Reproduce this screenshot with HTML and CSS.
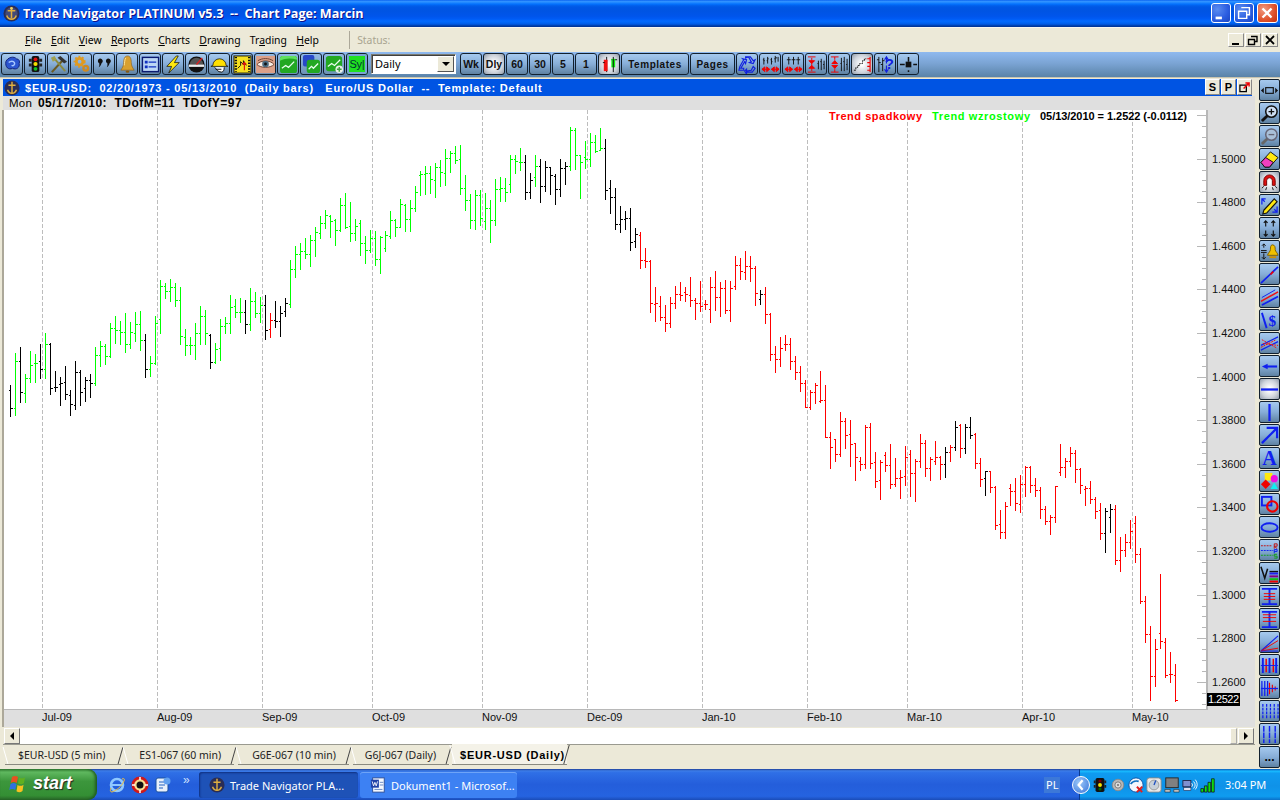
FILE: index.html
```html
<!DOCTYPE html>
<html lang="en">
<head>
<meta charset="utf-8">
<title>Trade Navigator PLATINUM v5.3</title>
<link rel="stylesheet" href="styles.css">
</head>
<body>
<div class="app">
  <header class="titlebar">
    <svg class="logo" viewBox="0 0 18 18"><circle cx="9" cy="9" r="8.5" fill="#2a2d55"/><circle cx="9" cy="9" r="6.5" fill="#444a78"/><path d="M9 2v12M5 6h8M4 11c1 3 3 4 5 4s4-1 5-4" fill="none" stroke="#e0b040" stroke-width="1.6"/><circle cx="9" cy="3.5" r="1.4" fill="#f0d060"/></svg>
    <span class="title-text">Trade Navigator PLATINUM v5.3  --  Chart Page: Marcin</span>
    <div class="winbtns">
      <button class="wb"><svg viewBox="0 0 20 20"><path d="M4 14h7v3H4z" fill="#fff"/></svg></button>
      <button class="wb"><svg viewBox="0 0 20 20"><path d="M7 4h9v8h-3M4 8h9v8H4z" fill="none" stroke="#fff" stroke-width="1.6"/></svg></button>
      <button class="wb wb-close"><svg viewBox="0 0 20 20"><path d="M5 5l10 10M15 5L5 15" stroke="#fff" stroke-width="2.6"/></svg></button>
    </div>
  </header>

  <nav class="menubar">
    <span class="mi"><u>F</u>ile</span>
    <span class="mi"><u>E</u>dit</span>
    <span class="mi"><u>V</u>iew</span>
    <span class="mi"><u>R</u>eports</span>
    <span class="mi"><u>C</u>harts</span>
    <span class="mi"><u>D</u>rawing</span>
    <span class="mi">Tr<u>a</u>ding</span>
    <span class="mi"><u>H</u>elp</span>
    <span class="status">Status:</span>
    <div class="mdibtns">
      <button class="mb"><svg viewBox="0 0 14 12"><path d="M3 9h7v2H3z"/></svg></button>
      <button class="mb"><svg viewBox="0 0 14 12"><path d="M5 2.500h6v5h-2M2.500 5.500h6v5h-6z" fill="none" stroke="#000" stroke-width="1.400"/></svg></button>
      <button class="mb"><svg viewBox="0 0 14 12"><path d="M3 2l8 8M11 2l-8 8" stroke="#000" stroke-width="1.800"/></svg></button>
    </div>
  </nav>

  <div class="toolbar">
    <button class="tb"><svg viewBox="0 0 20 20"><path d="M3 7c2-5 9-6 11-3 3 0 4 3 3 5 1 4-3 7-7 5-4 2-8-1-7-7z" fill="#2b55d0" stroke="#11227a"/><path d="M6 8c2-2 5-2 6 0s-1 4-3 3" fill="none" stroke="#a8c8ff" stroke-width="1.500"/></svg></button>
    <button class="tb"><svg viewBox="0 0 20 20"><path d="M3 4h3v3H3zM14 4h3v3h-3zM3 9h3v3H3zM14 9h3v3h-3z" fill="#222"/><rect x="6" y="1" width="8" height="17" rx="2" fill="#111"/><circle cx="10" cy="4.500" r="2" fill="#e01010"/><circle cx="10" cy="9.500" r="2.200" fill="#f5e000"/><circle cx="10" cy="14.500" r="2" fill="#10c020"/></svg></button>
    <button class="tb"><svg viewBox="0 0 20 20"><path d="M3 18L14 6" stroke="#6b5a20" stroke-width="2.200"/><path d="M9 3l3-2 7 6-3 2z" fill="#333"/><path d="M6 4l11 13" stroke="#8a8a40" stroke-width="2"/><path d="M2 3l4-2 2 4-4 2z" fill="#a0a050"/></svg></button>
    <button class="tb"><svg viewBox="0 0 20 20"><circle cx="8" cy="7" r="3.500" fill="none" stroke="#e09a20" stroke-width="3"/><circle cx="14.500" cy="14" r="2.500" fill="none" stroke="#d08a20" stroke-width="2.400"/><circle cx="8" cy="7" r="5.500" fill="none" stroke="#e09a20" stroke-width="1.600" stroke-dasharray="2 2"/></svg></button>
    <button class="tb"><svg viewBox="0 0 20 20"><path d="M3 6a2.600 2.600 0 1 1 4 2.500c-.5 2-1.500 3.500-3 4.500 .6-1.500 .8-3 .5-4.300A2.500 2.500 0 0 1 3 6zM11.500 6a2.600 2.600 0 1 1 4 2.500c-.5 2-1.500 3.500-3 4.500 .6-1.500 .8-3 .5-4.300A2.500 2.500 0 0 1 11.500 6z" fill="#111"/></svg></button>
    <button class="tb"><svg viewBox="0 0 20 20"><path d="M10 1c3 0 4 3 4 7 0 4 2 6 3 8H3c1-2 3-4 3-8 0-4 1-7 4-7z" fill="#d8a030" stroke="#8a5a10" stroke-width=".6"/><path d="M8 3c-1 2-1 5-1.500 8" stroke="#ffe8a0" fill="none"/><ellipse cx="10" cy="17.500" rx="2" ry="1.200" fill="#8a5a10"/></svg></button>
    <button class="tb"><svg viewBox="0 0 20 20"><rect x="1.500" y="2.500" width="17" height="15" fill="#bcd6f5" stroke="#0a1a70" stroke-width="1.500"/><path d="M4 6h3v3H4zM4 11h3v3H4z" fill="#1030c0"/><path d="M8 7.500h8M8 12.500h8" stroke="#1030c0" stroke-width="1.500"/></svg></button>
    <button class="tb"><svg viewBox="0 0 20 20"><path d="M13 1L3 12h5l-3 7 11-11h-5l4-7z" fill="#ffe810" stroke="#111" stroke-width=".8"/></svg></button>
    <button class="tb"><svg viewBox="0 0 20 20"><circle cx="10" cy="10" r="8.500" fill="#111"/><path d="M3 10a7 7 0 0 1 14 0z" fill="#555"/><rect x="2" y="10" width="16" height="2.500" fill="#eee"/><path d="M10 10l6-7" stroke="#e02020" stroke-width="1.400"/></svg></button>
    <button class="tb"><svg viewBox="0 0 20 20"><path d="M3 11a7 7 0 0 1 14 0l2 1H1z" fill="#ffe000" stroke="#111" stroke-width=".8"/><path d="M5 13c2 2 3 5 7 5 2 0 3-2 3-5" fill="#fff" stroke="#111"/><path d="M6 15h6" stroke="#111"/></svg></button>
    <button class="tb tb-flat"><svg viewBox="0 0 20 20"><rect x="1" y="1" width="18" height="18" fill="#f5e020" stroke="#111"/><path d="M3 2v16M17 2v16" stroke="#111" stroke-width="2.400" stroke-dasharray="1.500 1.500"/><path d="M5 14l3-3v-4l3 3v-4l3 5" stroke="#111" fill="none"/><path d="M12 16V8M10 10l2-2 2 2" stroke="#e01010" fill="none" stroke-width="1.200"/></svg></button>
    <button class="tb tb-flat"><svg viewBox="0 0 20 20"><rect x="0" y="1" width="20" height="18" fill="#dca088"/><path d="M1 10c4-5 14-5 18 0-4 4-14 4-18 0z" fill="#f8ece4" stroke="#6a4030"/><circle cx="10" cy="9.500" r="3.500" fill="#4a6a80"/><circle cx="10" cy="9.500" r="1.500" fill="#111"/><path d="M2 6c5-3 11-3 16 0" stroke="#6a4030" fill="none"/></svg></button>
    <button class="tb tb-flat"><svg viewBox="0 0 20 20"><rect x="1" y="1" width="18" height="18" rx="3" fill="#22a822"/><path d="M1 6c6-3 12-3 18-1v-2l-2-2H3L1 3z" fill="#60e060"/><path d="M3 14l4-3 3 2 6-6" stroke="#eafff0" fill="none" stroke-width="1.400"/></svg></button>
    <button class="tb tb-flat"><svg viewBox="0 0 20 20"><rect x="1" y="0" width="12" height="12" rx="2" fill="#2848c8"/><rect x="5" y="5" width="14" height="14" rx="3" fill="#22a822"/><path d="M7 15l3-3 2 2 5-5" stroke="#eafff0" fill="none" stroke-width="1.300"/></svg></button>
    <button class="tb tb-flat"><svg viewBox="0 0 20 20"><rect x="1" y="1" width="17" height="16" rx="3" fill="#22a822"/><path d="M3 12l4-3 3 2 6-6" stroke="#eafff0" fill="none" stroke-width="1.300"/><circle cx="15" cy="15" r="4" fill="#e8f0e8"/><path d="M15 12.500v5M12.500 15h5" stroke="#40a040" stroke-width="1.500"/></svg></button>
    <button class="tb tb-sym"><span class="sym">Sy|</span></button>

    <div class="combo"><span class="combo-val">Daily</span><span class="combo-btn"><i class="tri-down"></i></span></div>

    <button class="tb txt">Wk</button>
    <button class="tb txt tb-on">Dly</button>
    <button class="tb txt">60</button>
    <button class="tb txt">30</button>
    <button class="tb txt">5</button>
    <button class="tb txt">1</button>
    <button class="tb tb-on"><svg viewBox="0 0 20 20"><path d="M7 2v16" stroke="#111" stroke-width="1"/><rect x="4" y="5" width="4" height="12" fill="#f01010"/><path d="M3 8h2M12 5h6" stroke="#111"/><rect x="12" y="4" width="4" height="9" fill="#10f010"/><path d="M14 2v16" stroke="#111"/></svg></button>
    <button class="tb txt wide-t">Templates</button>
    <button class="tb txt wide-p">Pages</button>

    <button class="tb"><svg viewBox="0 0 20 20"><path d="M8 3l3-1 3 5-2 1 4 1 2-4-2 1-3-4H8zM6 5L2 12l-1 4h5v-2H3l4-7 1 2 1-4-4-1zM9 17v-2l-2 2 2 3v-2h6l3-4-2-2-2 4z" fill="none" stroke="#1020e0" stroke-width="1.200"/></svg></button>
    <button class="tb"><svg viewBox="0 0 20 20"><path d="M3 3v7M2 5h1M3 6h1M7 2v7M6 6h1M7 4h1M11 3v7M10 5h1M11 7h1M15 1v7M14 4h1M15 3h2M18 2v5" stroke="#111" fill="none"/><path d="M1 15h8M1 15l3-2.500v5zM9 15l-3-2.500v5zM11 15h8M11 15l3-2.500v5zM19 15l-3-2.500v5z" stroke="#f00000" fill="#f00000"/></svg></button>
    <button class="tb"><svg viewBox="0 0 20 20"><path d="M5 2v8M3 5h4M10 2v8M8 5h4M15 2v8M13 5h4" stroke="#111" fill="none"/><path d="M1 15h8M1 15l3-2.500v5zM9 15l-3-2.500v5zM11 15h8M11 15l3-2.500v5zM19 15l-3-2.500v5z" stroke="#f00000" fill="#f00000"/></svg></button>
    <button class="tb"><svg viewBox="0 0 20 20"><path d="M1 2h8M1 18h8M5 3v14M5 9l-3-3h6zM5 11l-3 3h6z" stroke="#f00000" fill="#f00000"/><path d="M12 6v9M15 4v12M18 6v9M11 9h1M14 7h1M17 10h1" stroke="#111" fill="none"/></svg></button>
    <button class="tb"><svg viewBox="0 0 20 20"><path d="M1 2h8M1 18h8M5 2v3M5 15v3M5 9V6l-3 3h6l-3-3zM5 11v3l-3-3h6l-3 3z" stroke="#f00000" fill="#f00000"/><path d="M12 3v14M15 2v15M18 4v12M11 9h1M14 7h1M17 10h1" stroke="#111" fill="none"/></svg></button>
    <button class="tb tb-on"><svg viewBox="0 0 20 20"><path d="M1 16h2v-3h2v-2h2V9h3V6h2V4h2" fill="none" stroke="#111" stroke-dasharray="2 1"/><path d="M18 2v16M15 4h3M15 8h3M15 12h3M15 16h3" stroke="#f00000" stroke-width="1.200"/></svg></button>
    <button class="tb"><svg viewBox="0 0 20 20"><path d="M3 2v16M1 5h2M3 8h2M7 3v14M5 10h2M7 6h2" stroke="#111" fill="none"/><path d="M11 9V3M9 5l2-3 2 3M11 11v6M9 15l2 3 2-3" fill="none" stroke="#1020e0" stroke-width="1.200"/></svg><b class="qm">?</b></button>
    <button class="tb"><svg viewBox="0 0 20 20"><rect x="7" y="7" width="6" height="6" fill="#111"/><path d="M10 2v16M1 10h18" stroke="#111" stroke-width="1.600" stroke-dasharray="5 9 5"/></svg></button>
  </div>

  <main class="workspace">
    <section class="doc">
      <div class="doc-title">
        <svg class="logo-sm" viewBox="0 0 18 18"><circle cx="9" cy="9" r="8.500" fill="#2a2d55"/><path d="M9 2v12M5 6h8M4 11c1 3 3 4 5 4s4-1 5-4" fill="none" stroke="#e0b040" stroke-width="1.600"/></svg>
        <span class="doc-text">$EUR-USD:  02/20/1973 - 05/13/2010  (Daily bars)   Euro/US Dollar  --  Template: Default</span>
        <div class="spbtns">
          <button class="sp">S</button>
          <button class="sp">P</button>
          <button class="sp"><svg viewBox="0 0 14 12"><path d="M2 3.500h7v7H2z" fill="none" stroke="#000" stroke-width="1.400"/><path d="M6 7l6-6M8 1h4v4" fill="none" stroke="#f00000" stroke-width="1.600"/></svg></button>
        </div>
      </div>
      <div class="info"><span class="info-day">Mon</span><span class="info-bold">05/17/2010:  TDofM=11  TDofY=97</span></div>
      <svg id="chart" class="chart" viewBox="4 110 1251 617" width="1251" height="617" xmlns="http://www.w3.org/2000/svg"></svg>
      <div class="hscroll">
        <span class="sb-btn"><i class="tri-left"></i></span>
        <span class="sb-track"></span>
        <span class="sb-thumb"></span>
        <span class="sb-btn"><i class="tri-right"></i></span>
      </div>
      <div class="tabs">
        <span class="tab t1">$EUR-USD (5 min)</span>
        <span class="tab t2">ES1-067 (60 min)</span>
        <span class="tab t3">G6E-067 (10 min)</span>
        <span class="tab t4">G6J-067 (Daily)</span>
        <span class="tab tab-on">$EUR-USD (Daily)</span>
      </div>
    </section>

    <aside class="side">
      <button class="sd"><svg viewBox="0 0 20 20"><rect x="6" y="7" width="8" height="6" fill="none" stroke="#111" stroke-width="1.200"/><path d="M1 10l3-3v6zM19 10l-3-3v6z" fill="#111"/></svg></button>
      <button class="sd"><svg viewBox="0 0 20 20"><path d="M2 18l6-6" stroke="#111" stroke-width="3"/><circle cx="12" cy="8" r="6" fill="#cfe0f5" stroke="#111" stroke-width="1.600"/><path d="M12 5v6M9 8h6" stroke="#111" stroke-width="1.400"/></svg></button>
      <button class="sd"><svg viewBox="0 0 20 20"><path d="M2 18l6-6" stroke="#666" stroke-width="3"/><circle cx="12" cy="8" r="6" fill="#a8bfd8" stroke="#667" stroke-width="1.600"/><path d="M9 8h6" stroke="#667" stroke-width="1.400"/></svg></button>
      <button class="sd"><svg viewBox="0 0 20 20"><path d="M1 13L11 2l8 6-9 10H5z" fill="#ffe810" stroke="#111"/><path d="M1 13l5-5 8 5-4 5H5z" fill="#f040c0" stroke="#111"/></svg></button>
      <button class="sd sd-on"><svg viewBox="0 0 20 20"><path d="M4 13V8a6 6 0 0 1 12 0v5h-3V8a3 3 0 0 0-6 0v5z" fill="#e01010" stroke="#700"/><path d="M2 16l2-2M6 18l1-3M14 18l-1-3M18 16l-2-2" stroke="#111"/></svg></button>
      <button class="sd"><svg viewBox="0 0 20 20"><path d="M4 15L15 3l3 3L7 18l-4 1z" fill="#ffe810" stroke="#111" stroke-width="1.200"/><path d="M2 9V3h4M2 3l3 3M18 11v6h-5M18 17l-3-3" fill="none" stroke="#1020f0" stroke-width="1.300"/></svg></button>
      <button class="sd"><svg viewBox="0 0 20 20"><path d="M6 2v6M4 4l2-2 2 2M14 2v6M12 4l2-2 2 2M6 12v6M4 16l2 2 2-2M14 12v6M12 16l2 2 2-2" fill="none" stroke="#111" stroke-width="1.200"/></svg></button>
      <button class="sd"><svg viewBox="0 0 20 20"><path d="M1 9h6M4 6V2M2 4l2-2 2 2M4 12v6M2 16l2 2 2-2M1 11h6" fill="none" stroke="#111"/><path d="M13 3c3 0 3 3 3 5s3 4 3 6H8c0-2 3-4 3-6s0-5 2-5z" fill="#f0c000" stroke="#806000"/><rect x="10" y="15" width="7" height="2" fill="#d09000"/></svg></button>
      <button class="sd"><svg viewBox="0 0 20 20"><path d="M1 19L19 2" stroke="#1020f0" stroke-width="1.800"/><path d="M11 10l3-3" stroke="#f00000" stroke-width="1.800"/></svg></button>
      <button class="sd"><svg viewBox="0 0 20 20"><path d="M1 14L19 4" stroke="#f01010" stroke-width="1.600"/><path d="M2 18l17-9" stroke="#1020f0" stroke-width="1.800"/><path d="M2 10l14-8" stroke="#1020f0"/></svg></button>
      <button class="sd"><svg viewBox="0 0 20 20"><path d="M2 2l5 16" stroke="#1020f0" stroke-width="2"/><text x="9" y="16" class="ic-dollar">$</text></svg></button>
      <button class="sd"><svg viewBox="0 0 20 20"><path d="M1 12L19 3M1 17L19 8" stroke="#1020f0" stroke-width="1.300"/><path d="M2 6l16 9M1 14L17 6M3 10l16 2" stroke="#f01010" stroke-dasharray="2 1"/></svg></button>
      <button class="sd"><svg viewBox="0 0 20 20"><path d="M7 10h11" stroke="#1020f0" stroke-width="2.200"/><path d="M2 10l6-3v6z" fill="#1020f0"/></svg></button>
      <button class="sd sd-on"><svg viewBox="0 0 20 20"><path d="M1 10h18" stroke="#1020f0" stroke-width="2.400"/></svg></button>
      <button class="sd"><svg viewBox="0 0 20 20"><path d="M10 1v18" stroke="#1020f0" stroke-width="2.400"/></svg></button>
      <button class="sd"><svg viewBox="0 0 20 20"><path d="M2 18L17 3" stroke="#1020f0" stroke-width="2.400"/><path d="M7 2h11v11" fill="none" stroke="#1020f0" stroke-width="2.400"/></svg></button>
      <button class="sd sd-a">A</button>
      <button class="sd"><svg viewBox="0 0 20 20"><rect x="5" y="1" width="8" height="8" fill="#ffe810"/><circle cx="15" cy="7" r="3.800" fill="#f010e0"/><path d="M11 18l4-7 4 7z" fill="#10f0f0"/><path d="M6 8l5 5-5 5-5-5z" fill="#f00000"/></svg></button>
      <button class="sd"><svg viewBox="0 0 20 20"><rect x="2" y="2" width="10" height="9" fill="none" stroke="#1020f0" stroke-width="2"/><circle cx="13" cy="12" r="5.500" fill="none" stroke="#f00000" stroke-width="2.200"/></svg></button>
      <button class="sd"><svg viewBox="0 0 20 20"><ellipse cx="10" cy="10" rx="8.500" ry="4.500" fill="none" stroke="#1020f0" stroke-width="2"/></svg></button>
      <button class="sd"><svg viewBox="0 0 20 20"><path d="M1 5h12" stroke="#c01010" stroke-dasharray="2 1"/><path d="M1 10h13" stroke="#1020f0" stroke-dasharray="2 1"/><path d="M1 15h13" stroke="#10a010" stroke-dasharray="2 1"/><path d="M15 8V3h3v2.500h-3l3 2.500" fill="none" stroke="#c01010"/><path d="M15 13V9h3v2h-3" fill="none" stroke="#1020f0"/><path d="M18 14h-3v2h3v2h-3" fill="none" stroke="#10a010"/></svg></button>
      <button class="sd"><svg viewBox="0 0 20 20"><path d="M1 3l4 12 3-10" fill="none" stroke="#111" stroke-width="1.600"/><path d="M10 8h9" stroke="#111" stroke-width="1.500"/><path d="M10 10h9" stroke="#2020f0" stroke-width="2"/><path d="M10 13h9" stroke="#800080" stroke-width="2"/><path d="M10 16h9" stroke="#10c010" stroke-width="2"/><path d="M10 18.500h9" stroke="#f00000" stroke-width="2"/></svg></button>
      <button class="sd"><svg viewBox="0 0 20 20"><path d="M2 2h16M2 18h16M10 2v16" stroke="#1020f0" stroke-width="2"/><path d="M4 7h12M4 10h12M4 13h12" stroke="#f00000"/></svg></button>
      <button class="sd"><svg viewBox="0 0 20 20"><path d="M2 2h16M2 18h16M10 2v16" stroke="#1020f0" stroke-width="2"/><path d="M3 5h14M3 8h14M3 12h14" stroke="#f00000"/></svg></button>
      <button class="sd"><svg viewBox="0 0 20 20"><path d="M1 19L19 3" stroke="#1020f0" stroke-width="1.300"/><path d="M1 19L19 8M1 19l18-3" stroke="#f00000"/><path d="M1 19h18" stroke="#1020f0"/></svg></button>
      <button class="sd"><svg viewBox="0 0 20 20"><path d="M3 2v16M10 2v16M17 2v16" stroke="#1020f0" stroke-width="2"/><path d="M6.500 3v14M14 3v14" stroke="#f00000" stroke-width="1.500"/><path d="M1 10h18" stroke="#1020f0"/></svg></button>
      <button class="sd"><svg viewBox="0 0 20 20"><path d="M2 2v16M5 2v16M8 2v16" stroke="#1020f0" stroke-width="1.300"/><path d="M10 4v12M13 6v8M16 8v4" stroke="#f00000" stroke-width="1.200"/><path d="M1 10h18" stroke="#1020f0" stroke-width="1.300"/></svg></button>
      <button class="sd"><svg viewBox="0 0 20 20"><path d="M3 2v16M7 2v16M11 2v16M15 2v16M19 2v16" stroke="#1020f0" stroke-width="1.300" stroke-dasharray="3 1"/></svg></button>
      <button class="sd"><svg viewBox="0 0 20 20"><path d="M4 1v18M10 1v18M16 1v18" stroke="#1020f0" stroke-width="1.500" stroke-dasharray="6 1"/></svg></button>
      <button class="sd sd-dots">...</button>
    </aside>
  </main>

  <footer class="taskbar">
    <button class="start"><svg class="flag" viewBox="0 0 20 20"><path d="M3 3c2-1.500 4-1.500 6 0l-1.300 6c-2-1.300-4-1.300-6 0z" fill="#e85020"/><path d="M10 3.500c2 1.200 4 1.200 6-.3L15 9c-2 1.500-4 1.500-6 .3z" fill="#60b020"/><path d="M1.500 10c2-1.300 4-1.300 6 0l-1.300 6c-2-1.300-4-1.300-6 0z" fill="#3070e0"/><path d="M8.500 11c2 1.200 4 1.200 6-.3L13.500 17c-2 1.500-4 1.500-6 .3z" fill="#f8c020"/></svg><span class="start-t">start</span></button>
    <div class="quick">
      <svg viewBox="0 0 18 18"><circle cx="9" cy="9" r="6" fill="none" stroke="#8fc8ff" stroke-width="2.600"/><path d="M4 9h10" stroke="#8fc8ff" stroke-width="2"/><path d="M14 3c2-1 3 0 2 2-2 5-8 10-12 11-2 0-2-2-1-4" fill="none" stroke="#f0c040"/></svg>
      <svg viewBox="0 0 18 18"><circle cx="9" cy="9" r="8.500" fill="#d01818"/><circle cx="9" cy="9" r="5.800" fill="#f8e090"/><circle cx="9" cy="9" r="3.500" fill="#111"/><path d="M9 1v3M9 14v3M1 9h3M14 9h3" stroke="#fff" stroke-width="1.500"/></svg>
      <svg viewBox="0 0 18 18"><rect x="2" y="2" width="12" height="14" rx="2" fill="#e8f0fa" stroke="#1a50a0"/><path d="M5 6h6M5 9h6M5 12h4" stroke="#2060c0"/><circle cx="13" cy="5" r="3.500" fill="#60a0f0"/></svg>
      <span class="more">»</span>
    </div>
    <div class="task task-on"><svg class="logo-sm" viewBox="0 0 18 18"><circle cx="9" cy="9" r="8.500" fill="#2a2d55"/><path d="M9 2v12M5 6h8M4 11c1 3 3 4 5 4s4-1 5-4" fill="none" stroke="#e0b040" stroke-width="1.600"/></svg><span>Trade Navigator PLA...</span></div>
    <div class="task"><svg class="logo-sm" viewBox="0 0 18 18"><rect x="3" y="1" width="13" height="16" fill="#f4f8ff" stroke="#2a4a90"/><rect x="1" y="3" width="9" height="9" fill="#2040a8"/><path d="M2.500 5l1.500 5 1.500-4 1.500 4 1.500-5" fill="none" stroke="#fff"/><path d="M11 6h4M11 9h4M5 14h9" stroke="#6080c0"/></svg><span>Dokument1 - Microsof...</span></div>
    <div class="lang"><span>PL</span></div>
    <div class="tray">
      <span class="chev"><svg viewBox="0 0 20 20"><path d="M12 4l-5 6 5 6" fill="none" stroke="#fff" stroke-width="2.800"/></svg></span>
      <svg viewBox="0 0 18 18"><path d="M2 4h2v3H2zM14 4h2v3h-2zM2 9h2v3H2zM14 9h2v3h-2z" fill="#222"/><rect x="4" y="1" width="10" height="16" rx="2" fill="#111"/><circle cx="9" cy="4.500" r="1.800" fill="#700"/><circle cx="9" cy="9" r="2.200" fill="#f5e000"/><circle cx="9" cy="13.500" r="1.800" fill="#060"/></svg>
      <svg viewBox="0 0 18 18"><circle cx="9" cy="9" r="6.500" fill="#b8b8b8" stroke="#888"/><circle cx="9" cy="9" r="3.500" fill="#ddd" stroke="#777"/><circle cx="9" cy="9" r="1.200" fill="#777"/></svg>
      <svg viewBox="0 0 18 18"><circle cx="9" cy="9" r="8" fill="#f4f8ff" stroke="#1050a0"/><path d="M3 8c2-3 6-4 9-3" stroke="#1070c0" fill="none" stroke-width="2"/><path d="M10 11l6 6M16 11l-6 6" stroke="#e02020" stroke-width="2.200"/></svg>
      <svg viewBox="0 0 18 18"><rect x="1" y="1" width="16" height="16" rx="3" fill="#e8e8e8" stroke="#888"/><circle cx="9" cy="9" r="5.500" fill="#c8d0d8" stroke="#999"/><path d="M9 9l2-5" stroke="#2050c0" stroke-width="1.500"/></svg>
      <svg viewBox="0 0 18 18"><rect x="2" y="1" width="14" height="11" fill="#808080" stroke="#222"/><path d="M1 14h6v3H1zM11 14h6v3h-6z" fill="#c0c0c0" stroke="#222" stroke-width=".6"/></svg>
      <svg viewBox="0 0 18 18"><rect x="1" y="4" width="9" height="7" fill="#8090d0" stroke="#224"/><rect x="2" y="12" width="8" height="3" fill="#e0e0f0" stroke="#224" stroke-width=".6"/><path d="M11 7a3 3 0 0 1 0 4M13 5a6 6 0 0 1 0 8M15 3a9 9 0 0 1 0 11" fill="none" stroke="#fff"/></svg>
      <svg viewBox="0 0 18 18"><path d="M1 13h3v4H1zM5 10h3v7H5zM9 6h3v11H9zM13 2h3v15h-3z" fill="#10e010" stroke="#111" stroke-width=".8"/></svg>
      <span class="clock">3:04 PM</span>
    </div>
  </footer>
</div>
<script src="chart.js"></script>
</body>
</html>
```
FILE: styles.css
```css
* { box-sizing: border-box; }
html, body { margin: 0; padding: 0; }
body { width: 1280px; height: 800px; overflow: hidden; font-family: "Liberation Sans", Arial, sans-serif; font-size: 11px; color: #000; background: #ece9d8; }
button { font: inherit; padding: 0; margin: 0; cursor: default; }
svg { display: block; }
.app { display: flex; flex-direction: column; width: 1280px; height: 800px; }

/* title bar */
.titlebar { height: 27px; flex: none; display: flex; align-items: center; padding: 0 2px 1px 3px; color: #fff;
  background: linear-gradient(#0058ee 0, #3593ff 4%, #288eff 8%, #127dff 12%, #036ffc 16%, #0262ee 20%, #0057e5 26%, #0054e3 40%, #0055eb 60%, #005bf5 70%, #026afe 78%, #0062ef 86%, #0052d6 91%, #0040ab 95%, #003092 100%); }
.logo { width: 17px; height: 17px; flex: none; }
.title-text { margin-left: 3px; font-family: "Open Sans", "Liberation Sans", sans-serif; font-weight: 700; font-size: 12.6px; white-space: pre; text-shadow: 1px 1px 0 #0f1089; }
.winbtns { margin-left: auto; display: flex; gap: 3px; }
.wb { width: 20px; height: 20px; border: 1px solid #fff; border-radius: 3px; background: radial-gradient(circle at 30% 30%, #5a8cf0, #2a5ce0 60%, #1c46c0); }
.wb-close { width: 21px; background: radial-gradient(circle at 30% 30%, #f09a80, #e0512a 60%, #c03010); }
.wb svg { width: 18px; height: 18px; }

/* menu */
.menubar { height: 25px; flex: none; display: flex; align-items: center; padding: 0 2px 0 25px; background: #ece9d8; border-top: 1px solid #f8f6ee; font-family: "Noto Sans", "Liberation Sans", sans-serif; font-size: 10.4px; }
.mi { margin-right: 9.3px; white-space: pre; }
.status { margin-left: 21px; padding-left: 7px; height: 18px; line-height: 18px; border-left: 1px solid #aca899; color: #a8a490; }
.mdibtns { margin-left: auto; display: flex; gap: 1px; }
.mb { width: 16px; height: 14px; background: #ece9d8; border: 1px solid; border-color: #fff #888 #888 #fff; }
.mb svg { width: 14px; height: 12px; }

/* top toolbar */
.toolbar { height: 26px; flex: none; display: flex; align-items: flex-start; gap: 1px; padding: 1px 0 0 1px; background: linear-gradient(#8fb9ef, #7ba4d4 45%, #5a83a8); border-bottom: 1px solid #c8c4b0; }
.tb { position: relative; width: 22px; height: 22px; flex: none; display: flex; align-items: center; justify-content: center; border: 1px solid #12202e; border-radius: 3px; background: linear-gradient(#a6c9ee, #87aed8 50%, #5f82a2); }
.tb svg { width: 19px; height: 19px; }
.tb-flat { background: linear-gradient(#94bbe4, #6d92b6); }
.tb-on { background: radial-gradient(ellipse at 50% 50%, #ffffff 10%, #cfd4dc 60%, #8f9aa8); }
.tb-sym { background: #20e020; outline: 2px solid #7ba4d4; outline-offset: -3px; }
.sym { font-family: "Liberation Sans", sans-serif; font-size: 11px; color: #033; letter-spacing: -.2px; }
.txt { font-family: "Liberation Sans", sans-serif; font-weight: 700; font-size: 10.5px; color: #111; }
.wide-t { width: 68px; letter-spacing: .55px; font-size: 10px; }
.wide-p { width: 45px; letter-spacing: .55px; font-size: 10px; }
.qm { position: absolute; right: 1px; top: 1px; font-family: "Liberation Sans", sans-serif; font-size: 15px; line-height: 18px; color: #1020e0; }
.combo { width: 85px; height: 20px; margin: 1px 3px 0 2px; flex: none; display: flex; background: #fff; border: 1px solid; border-color: #7a7a70 #fff #fff #7a7a70; box-shadow: inset 1px 1px 0 #404040; }
.combo-val { flex: 1; padding: 2px 0 0 3px; font-family: "Noto Sans", "Liberation Sans", sans-serif; font-size: 11px; line-height: 14px; }
.combo-btn { width: 17px; margin: 1px; display: flex; align-items: center; justify-content: center; background: #ece9d8; border: 1px solid; border-color: #fff #555 #555 #fff; }
.tri-down { width: 0; height: 0; border: 4px solid transparent; border-top-color: #000; border-bottom: 0; }

/* workspace */
.workspace { flex: 1; min-height: 0; display: flex; background: #ece9d8; }
.doc { width: 1255px; flex: none; display: flex; flex-direction: column; padding-left: 3px; padding-top: 1px; }
.doc-title { height: 17px; flex: none; display: flex; align-items: center; background: #0054e3; color: #fff; padding-left: 1px; margin-right: 3px; }
.logo-sm { width: 16px; height: 16px; flex: none; }
.doc-text { margin-left: 5px; font-weight: 700; font-size: 11px; letter-spacing: .77px; white-space: pre; }
.spbtns { margin-left: auto; display: flex; gap: 1px; height: 17px; }
.sp { width: 15px; height: 16px; display: flex; align-items: center; justify-content: center; font-weight: 700; font-size: 11px; background: #ece9d8; border: 1px solid; border-color: #fff #888 #888 #fff; }
.sp svg { width: 13px; height: 11px; }
.info { height: 14px; flex: none; display: flex; align-items: center; gap: 6px; background: #dfdfdf; padding-left: 6px; font-size: 11.5px; letter-spacing: .2px; white-space: pre; }
.info-bold { font-weight: 700; font-size: 12px; letter-spacing: .45px; }
.chart { flex: none; margin-left: 1px; box-shadow: -2px 0 0 #aca899; }
.hscroll { height: 16px; flex: none; margin: 1px 1px 0 0; display: flex; align-items: center; padding-left: 1px; }
.sb-btn { width: 16px; height: 16px; flex: none; display: flex; align-items: center; justify-content: center; background: #ece9d8; border: 1px solid; border-color: #fff #777 #777 #fff; }
.sb-track { flex: 1; height: 16px; background: #fff; }
.sb-thumb { width: 7px; height: 16px; flex: none; margin-right: 1px; background: #ece9d8; border: 1px solid; border-color: #fff #aaa #aaa #fff; }
.tri-left { width: 0; height: 0; border: 4px solid transparent; border-right-color: #000; border-left: 0; }
.tri-right { width: 0; height: 0; border: 4px solid transparent; border-left-color: #000; border-right: 0; }
.tabs { height: 23px; flex: none; display: flex; align-items: flex-end; padding: 1px 0 2px 2px; border-top: 1px solid #9a9a90; font-family: "Noto Sans", "Liberation Sans", sans-serif; font-size: 10.5px; color: #222; }
.tab { position: relative; height: 19px; line-height: 19px; white-space: pre; border-bottom: 1px solid #8a8a80; }
.tab::before, .tab::after { content: ""; position: absolute; top: 1px; bottom: 0; width: 1px; }
.tab::after { right: 0; background: #444; transform: skewX(-16deg); }
.tab::before { left: 0; background: #fff; transform: skewX(16deg); }
.t1 { padding: 0 16px 0 13px; }
.t2 { padding: 0 13px 0 14px; margin-left: 4px; }
.t3 { padding: 0 13px 0 14px; margin-left: 4px; }
.t4 { padding: 0 13px 0 12px; margin-left: 4px; }
.tab-on { height: 21px; padding: 2px 2px 0 8px; margin-left: 3px; font-family: "Liberation Sans", sans-serif; font-size: 11px; font-weight: 700; letter-spacing: .75px; background: #f4f2e8; color: #000; }

/* side toolbox */
.side { width: 25px; flex: none; display: flex; flex-direction: column; gap: 1px; padding: 1px 0 0 4px; }
.sd { width: 21px; height: 22px; flex: none; display: flex; align-items: center; justify-content: center; border: 1px solid #12202e; border-radius: 2px; background: linear-gradient(#a6c9ee, #87aed8 50%, #5f82a2); }
.sd svg { width: 19px; height: 19px; }
.sd-on { background: radial-gradient(ellipse at 50% 50%, #ffffff 10%, #cfd4dc 60%, #8f9aa8); }
.sd-a { font-family: "Liberation Serif", serif; font-weight: 700; font-size: 20px; line-height: 20px; color: #1020f0; }
.sd-dots { font-weight: 700; font-size: 12px; line-height: 14px; }
.ic-dollar { font-family: "Liberation Serif", serif; font-weight: 700; font-size: 16px; fill: #1020f0; }

/* chart text (svg) */
.ax { font-family: "Liberation Sans", sans-serif; font-size: 11px; fill: #111; }
.lg { font-family: "Liberation Sans", sans-serif; font-size: 11px; font-weight: 700; }
.lg-r { fill: #ff0000; }
.lg-g { fill: #00ff00; }
.lg-k { fill: #000; }
.tag { font-family: "Liberation Sans", sans-serif; font-size: 11px; fill: #fff; }

/* taskbar */
.taskbar { height: 31px; flex: none; display: flex; align-items: stretch; color: #fff; background: linear-gradient(#1f3f98 0, #3c7de8 6%, #2f6fe6 12%, #245edb 50%, #2563e0 88%, #1a4cb8 100%); }
.start { width: 97px; flex: none; display: flex; align-items: center; gap: 4px; padding: 0 0 2px 9px; border: 0; border-radius: 0 9px 9px 0; color: #fff; background: linear-gradient(#3a8a3a 0, #5fb85f 10%, #3c963c 40%, #348f34 85%, #2a6a2a 100%); box-shadow: inset -2px 0 3px #1f5a1f; }
.flag { width: 20px; height: 20px; }
.start-t { font-family: "Liberation Sans", sans-serif; font-weight: 700; font-style: italic; font-size: 18px; text-shadow: 1px 1px 1px #222; }
.quick { width: 102px; flex: none; display: flex; align-items: center; gap: 5px; padding-left: 11px; }
.quick svg { width: 18px; height: 18px; flex: none; }
.more { font-size: 12px; margin: -10px 0 0 6px; color: #cfe0ff; }
.task { width: 157px; height: 26px; margin: 3px 2px 2px 0; flex: none; display: flex; align-items: center; gap: 5px; padding-left: 10px; border-radius: 3px; background: #3d81f3; font-family: "Noto Sans", "Liberation Sans", sans-serif; font-size: 11px; box-shadow: inset 0 1px 0 #6ea4f8; white-space: nowrap; }
.task-on { width: 159px; background: #1e52b7; box-shadow: inset 1px 1px 2px #0f3080; }
.lang { margin-left: auto; width: 35px; display: flex; align-items: center; }
.lang span { padding: 0 2px; height: 16px; line-height: 16px; font-family: "Noto Sans", sans-serif; font-size: 11px; background: #3c78d8; }
.tray { width: 201px; flex: none; display: flex; align-items: center; gap: 2px; background: linear-gradient(#0c59b9 0, #18bbff 7%, #0f9bf0 14%, #0f92e8 55%, #0f9cf0 88%, #0a70c8 100%); border-left: 1px solid #0a3a90; }
.tray svg { width: 16px; height: 16px; flex: none; }
.chev { width: 18px; height: 18px; margin-left: -8px; flex: none; border-radius: 50%; background: radial-gradient(circle at 40% 35%, #9cc8fa, #3672d8); border: 1px solid #fff; }
.chev svg { width: 16px; height: 16px; }
.clock { margin-left: 7px; font-family: "Noto Sans", "Liberation Sans", sans-serif; font-size: 11px; white-space: nowrap; }
```
FILE: chart.js
```js
(function () {
  var NS = 'http://www.w3.org/2000/svg';
  var svg = document.getElementById('chart');
  function el(tag, attrs, text) {
    var n = document.createElementNS(NS, tag);
    for (var k in attrs) n.setAttribute(k, attrs[k]);
    if (text) n.textContent = text;
    svg.appendChild(n);
    return n;
  }

  // Each bar: colour, high, low, open, close, read in units of 1/3 pixel.
  var segments = [
    { start: 0, top: 130, bars: 'k765,857,781,835 g669,855,835,694 k651,815,694,787 g732,815,790,745 g663,755,745,706 g672,755,700,698 k642,743,694,718 g609,743,718,643 k639,791,643,775 k723,782,772,770 k741,824,763,760 k708,806,757,793 k780,854,796,823 k693,836,826,727 k720,824,727,787 k741,812,775,751 k732,800,750,760 g651,766,760,676 g633,707,676,649 g642,701,649,679 g579,680,679,594 g558,639,594,600 g573,642,600,606 g549,665,606,643 g576,653,643,607 g546,632,609,582 g543,659,582,631 k612,740,631,718 g678,737,718,700 g558,701,700,579 g450,608,568,469 g459,503,469,483 g447,513,483,472 g459,527,472,511 g471,641,511,619 g597,675,622,646 g621,671,646,646 g579,687,646,610 g528,641,610,559 g540,641,559,610 k612,713,615,697 g639,700,697,658 g567,690,655,589 g561,610,589,580 g495,610,580,531 g507,562,529,547 g504,577,547,547 k510,608,547,583 g474,599,583,514 g486,561,514,548 g501,575,548,526 k495,627,526,601 r549,620,598,571 k513,590,571,573 k528,617,572,550 k504,557,544,520 g390,530,522,417 g348,440,417,373 g339,417,373,364 g324,383,364,373 g315,407,373,331 g291,377,331,307 g258,323,310,280 g240,293,280,255 g255,321,257,273 g267,344,270,301 g204,302,301,226 g189,293,226,291 g216,332,289,310 g267,329,310,289 g270,374,279,340 g318,398,340,361 g300,367,361,325 g303,404,325,388 g318,428,388,320 g303,362,355,316 g243,323,318,271 g267,317,271,292 g207,292,292,223 g222,302,226,266 g210,302,268,235 g168,244,235,186' },
    { start: 82, top: 120, bars: 'g153,224,165,162 g138,221,162,160 g138,218,160,178 g129,230,181,142 g120,197,142,157 g87,194,159,114 g93,155,114,100 g78,128,100,120 g75,221,118,205 g165,269,205,241 g222,323,241,301 g210,326,301,226 g210,315,226,295 g219,326,304,265 g240,365,265,301 g177,314,301,208 g171,242,208,205 g174,242,205,217 g105,215,193,118 g105,158,118,122 g84,151,125,127 k105,236,127,217 k159,233,217,181 g105,197,172,139 k117,245,139,199 k123,212,199,142 k141,221,142,166 k162,251,169,208 k117,227,208,145 k126,191,145,139 g21,149,139,31 g24,146,31,106 g105,233,106,127 g63,143,112,118 g39,137,118,67 g45,97,67,92 g24,91,91,85 k57,236,85,211 k180,278,205,232 k204,328,232,313 k258,335,313,298 k273,326,298,295 k264,389,295,367 k324,382,364,343 r336,443,345,421 r384,442,421,424 r420,575,424,550 r501,602,553,550 r528,599,559,592 r555,632,592,610 r531,620,610,550 r498,563,550,523 r486,539,523,526 r501,542,517,523 r471,557,526,541 r534,596,541,550 r483,572,550,559 r541,568,553,553 r471,605,568,502 r453,571,502,532 r486,587,532,505 r480,578,505,571 r483,602,571,505 r408,506,499,436 r414,476,436,454 r393,476,457,439 r407,482,439,445 r438,554,445,520 k510,553,538,523 r501,608,523,583 r579,719,583,703 r678,755,703,718 r651,737,718,685 r645,689,673,673 r654,746,673,724 r708,776,724,757 r738,812,757,790 r780,862,790,862 r810,868,862,817 r789,848,817,796' },
    { start: 162, top: 400, bars: 'r-87,7,3,1 r-45,112,1,112 r96,204,112,142 r117,182,118,163 r36,167,163,64 r54,143,64,106 r60,197,103,133 r129,239,130,172 r171,209,184,193 r75,203,193,82 r69,203,82,190 r156,260,187,244 r181,296,241,187 r156,212,166,196 r132,263,196,253 r174,257,253,235 r210,293,235,230 r138,254,229,172 r150,287,163,220 r178,302,220,184 r102,200,184,130 r120,227,130,205 r171,239,205,178 r123,191,184,172 r168,236,172,193 k141,230,193,157 r135,182,157,142 k63,149,142,82 r72,170,76,145 k72,158,145,82 k51,113,82,106 r99,203,103,190 r174,257,190,238 k213,284,235,214 r213,275,214,262 r259,386,262,376 r330,413,373,397 r306,413,397,319 r252,314,265,274 r234,329,274,310 r225,335,313,253 r198,287,253,202 r198,275,202,256 r234,287,256,271 r261,353,271,328 r318,373,328,364 r345,401,364,352 r258,365,352,259 r132,224,217,202 r174,230,202,184 r141,197,184,160 r150,245,160,208 r204,278,208,256 r258,314,268,265 r243,308,265,298 r291,353,298,334 r309,418,331,400 k324,455,400,334 k312,395,352,328 r315,491,328,481 r411,512,481,451 r402,467,451,427 r360,443,427,394 r348,485,370,463 r444,610,463,604 r588,725,604,703 r678,899,703,827 r717,857,829,748 r522,743,700,724 r714,830,727,826 r756,845,823,823 r792,902,826,899' }
  ];

  el('rect', { x: 4, y: 110, width: 1251, height: 617, fill: '#dfdfdf' });
  el('rect', { x: 4, y: 110, width: 1202, height: 599, fill: '#fff' });
  el('path', { d: 'M1206.5 110V710M1207.5 110V710M4 709.5H1208', stroke: '#b8b8b8', fill: 'none', 'shape-rendering': 'crispEdges' });

  var grid = [42, 157, 262, 372, 482, 587, 702, 807, 907, 1022, 1132];
  var months = ['Jul-09', 'Aug-09', 'Sep-09', 'Oct-09', 'Nov-09', 'Dec-09', 'Jan-10', 'Feb-10', 'Mar-10', 'Apr-10', 'May-10'];
  grid.forEach(function (x, i) {
    el('path', { d: 'M' + (x + .5) + ' 110V709', stroke: '#bdbdbd', 'stroke-dasharray': '4 2', fill: 'none', 'shape-rendering': 'crispEdges' });
    el('text', { x: x, y: 721, class: 'ax' }, months[i]);
  });

  var ticks = '';
  for (var k = 0; k <= 54; k++) {
    var y = Math.round(115 + 10.9 * k) + .5;
    ticks += 'M' + (k % 4 === 0 ? 1197 : 1202) + ' ' + y + 'H1206';
    if (k % 4 === 0 && k > 0) {
      var v = (1.52 - 0.005 * k).toFixed(4);
      el('text', { x: 1212, y: Math.round(y) + 3, class: 'ax' }, v);
    }
  }
  el('path', { d: ticks, stroke: '#b8b8b8', fill: 'none', 'shape-rendering': 'crispEdges' });

  var colors = { g: '#00ff00', k: '#000', r: '#ff0000' };
  var paths = { g: '', k: '', r: '' };
  segments.forEach(function (s) {
    s.bars.split(' ').forEach(function (b, i) {
      var c = b[0];
      var n = b.slice(1).split(',').map(function (t) { return Math.round(s.top + t / 3); });
      var x = 10 + 5 * (s.start + i);
      paths[c] += 'M' + (x + .5) + ' ' + n[0] + 'V' + (n[1] + 1) +
        'M' + (x - 1) + ' ' + (n[2] + .5) + 'H' + x +
        'M' + (x + 1) + ' ' + (n[3] + .5) + 'H' + (x + 3);
    });
  });
  Object.keys(paths).forEach(function (c) {
    el('path', { d: paths[c], stroke: colors[c], fill: 'none', 'shape-rendering': 'crispEdges' });
  });

  el('rect', { x: 1207, y: 693, width: 33, height: 13, fill: '#000' });
  el('text', { x: 1208, y: 703, class: 'tag', textLength: 31 }, '1.2522');

  el('text', { x: 829, y: 120, class: 'lg lg-r', textLength: 93 }, 'Trend spadkowy');
  el('text', { x: 932, y: 120, class: 'lg lg-g', textLength: 98 }, 'Trend wzrostowy');
  el('text', { x: 1040, y: 120, class: 'lg lg-k', textLength: 147 }, '05/13/2010 = 1.2522 (-0.0112)');
})();
```
